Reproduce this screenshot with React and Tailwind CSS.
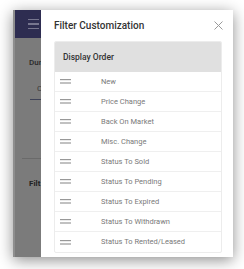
import React from "react";

const rows = [
  "New",
  "Price Change",
  "Back On Market",
  "Misc. Change",
  "Status To Sold",
  "Status To Pending",
  "Status To Expired",
  "Status To Withdrawn",
  "Status To Rented/Leased",
];

function DragHandle() {
  return (
    <svg width="11" height="5" viewBox="0 0 11 5" className="shrink-0">
      <rect x="0" y="0" width="11" height="1.2" fill="#999" />
      <rect x="0" y="3.4" width="11" height="1.2" fill="#999" />
    </svg>
  );
}

export default function App() {
  return (
    <div
      className="w-[244px] h-[269px] bg-white pt-[10px] pl-[13px] overflow-hidden"
      style={{ fontFamily: "Roboto, 'Liberation Sans', sans-serif" }}
    >
      <div className="flex w-[220px] h-[247px] shadow-[0_3px_14px_rgba(0,0,0,0.45)]">
        {/* dimmed page behind the drawer */}
        <div className="w-[28px] flex flex-col bg-[#7b7b7b] border-l-2 border-[#8e8e8e] overflow-hidden">
          <div className="h-[28px] bg-[#2e2d51] flex items-center justify-end pr-[2px]">
            <div className="flex flex-col gap-[3px]">
              <div className="w-[11px] h-[1.5px] bg-[#77768f]" />
              <div className="w-[11px] h-[1.5px] bg-[#77768f]" />
              <div className="w-[11px] h-[1.5px] bg-[#77768f]" />
            </div>
          </div>
          <div className="relative flex-1">
            <span className="absolute left-[14px] top-[19px] text-[8px] font-medium text-[#2a2a2a] whitespace-nowrap">Dur</span>
            <span className="absolute left-[22px] top-[45px] text-[8px] text-[#3a3a3a] whitespace-nowrap">C</span>
            <div className="absolute left-[15px] top-[61px] w-[12px] h-px bg-[#3e4257]" />
            <div className="absolute left-[7px] top-[120px] w-[20px] h-px bg-[#6a6a6a]" />
            <span className="absolute left-[14px] top-[140px] text-[8px] font-bold text-[#222] whitespace-nowrap">Filt</span>
          </div>
        </div>

        {/* drawer */}
        <div className="w-[192px] bg-white pl-[13px] pr-[11px] flex flex-col">
          <div className="h-[31px] flex items-center justify-between">
            <span className="text-[10px] font-medium text-[#333]">Filter Customization</span>
            <svg width="9" height="9" viewBox="0 0 9 9" className="mr-[-1px]">
              <path d="M0.5 0.5 L8.5 8.5 M8.5 0.5 L0.5 8.5" stroke="#9a9a9a" strokeWidth="1" />
            </svg>
          </div>
          <div className="border border-[#ececec] rounded-[2px] overflow-hidden">
            <div className="h-[30px] bg-[#e0e0e0] flex items-center pl-[8px]">
              <span className="text-[8.5px] font-medium text-[#333]">Display Order</span>
            </div>
            {rows.map((r, i) => (
              <div
                key={r}
                className={
                  "h-[20px] flex items-center pl-[5px] " +
                  (i < rows.length - 1 ? "border-b border-[#efefef]" : "")
                }
              >
                <DragHandle />
                <span className="ml-[30px] text-[7.5px] text-[#7a7a7a] whitespace-nowrap">{r}</span>
              </div>
            ))}
          </div>
        </div>
      </div>
    </div>
  );
}
